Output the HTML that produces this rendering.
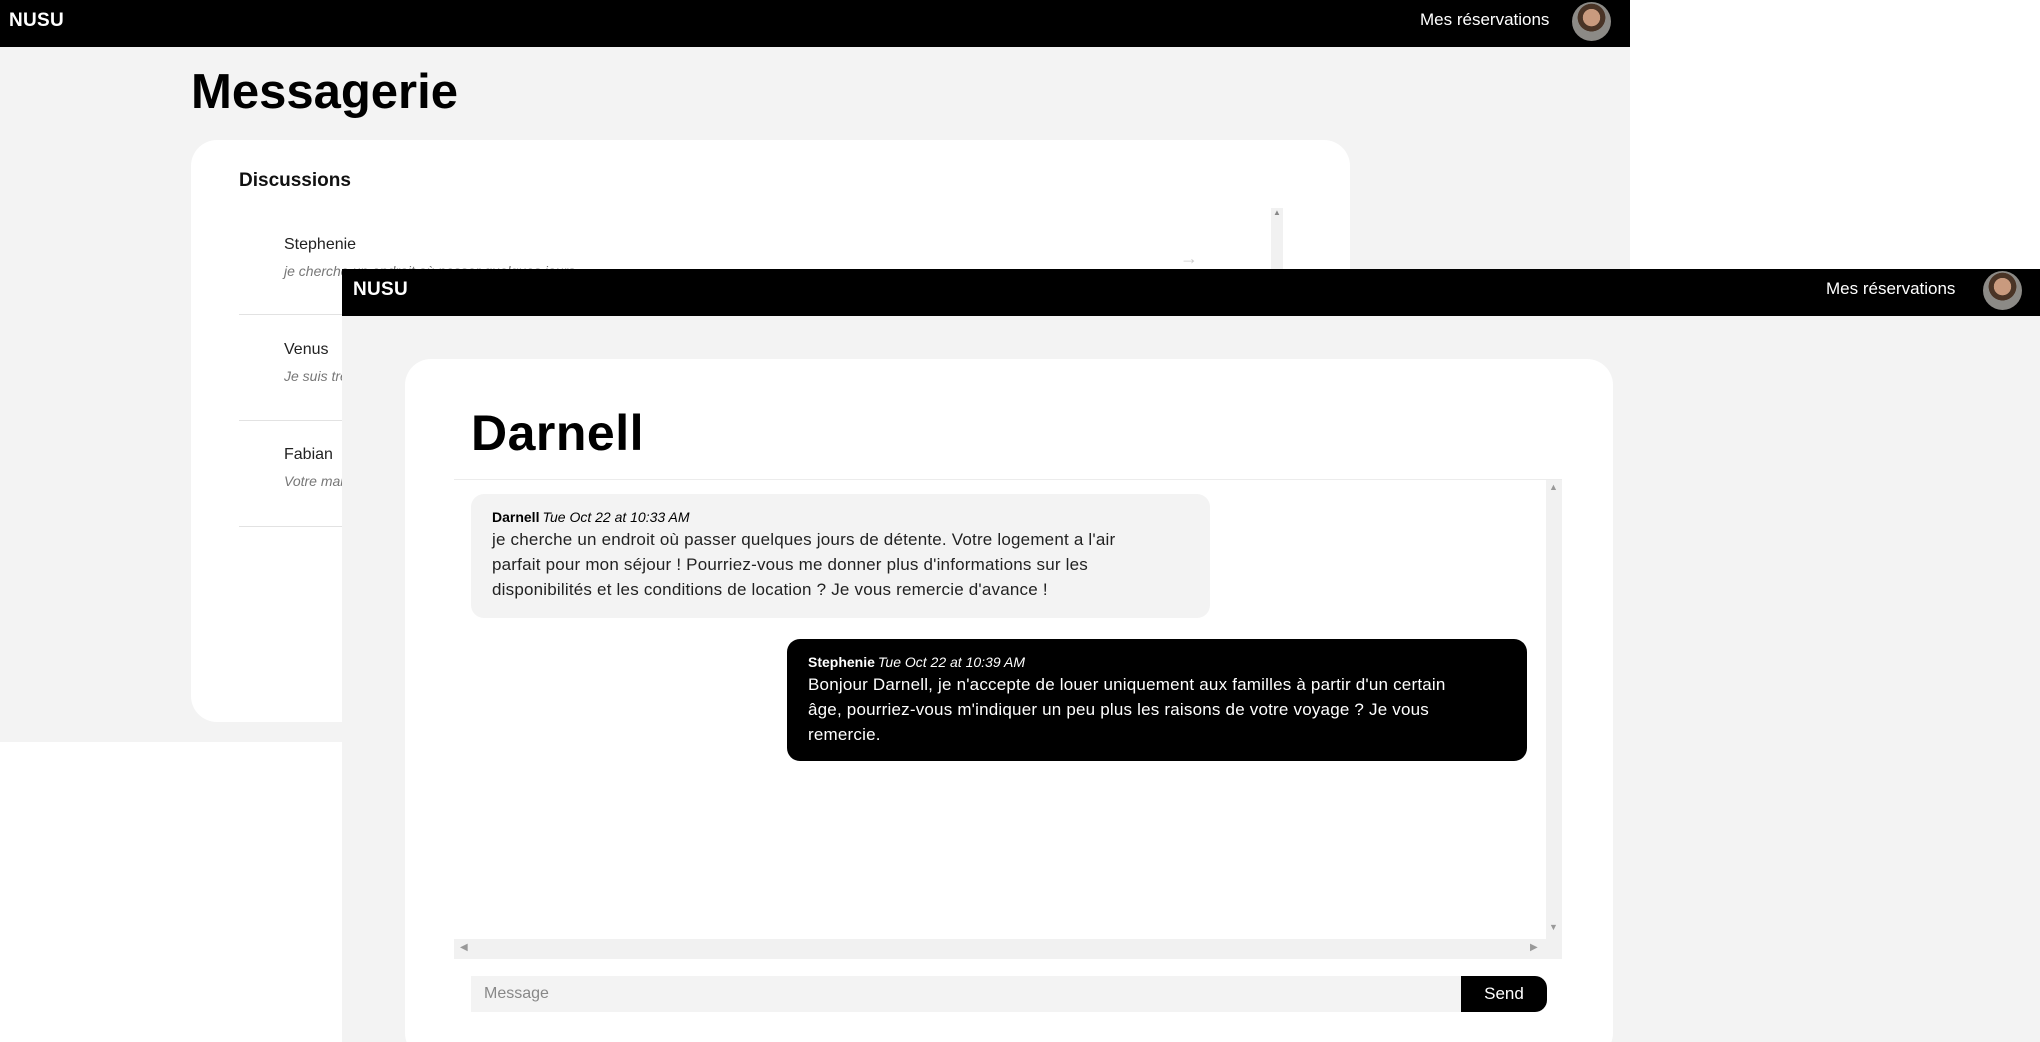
<!DOCTYPE html>
<html><head><meta charset="utf-8">
<style>
*{margin:0;padding:0;box-sizing:border-box}
html,body{width:2040px;height:1042px;overflow:hidden;background:#fff;font-family:"Liberation Sans",sans-serif;position:relative}
.abs{position:absolute}
.nav{background:#000;color:#fff}
.logo{font-weight:bold;font-size:19px;letter-spacing:0.3px}
.av{border-radius:50%;background:radial-gradient(circle at 50% 40%,#c99a7e 0 28%,#4a3426 29% 45%,#8c8a86 46%);}
.sep{height:1px;background:#e2e2e2}
.name{font-size:16px;color:#222}
.prev{font-size:14px;color:#777;font-style:italic}
.msg{font-size:17px;line-height:25px;white-space:nowrap;letter-spacing:0.2px}
.hdr{font-size:14px;line-height:20px}
.hdr b{font-weight:bold}
.hdr i{margin-left:3px}
</style></head><body>
<div class="abs" style="left:0;top:0;width:1630px;height:742px;background:#f3f3f3"></div>
<div class="abs nav" style="left:0;top:0;width:1630px;height:47px"></div>
<div class="abs logo" style="left:9px;top:10px;color:#fff">NUSU</div>
<div class="abs" style="left:1420px;top:10px;color:#fff;font-size:17px">Mes réservations</div>
<div class="abs av" style="left:1572px;top:2px;width:39px;height:39px"></div>
<div class="abs" style="left:191px;top:64px;font-size:49px;font-weight:bold;letter-spacing:0px">Messagerie</div>
<div class="abs" style="left:191px;top:140px;width:1159px;height:582px;background:#fff;border-radius:26px"></div>
<div class="abs" style="left:239px;top:170px;font-size:19px;font-weight:600;color:#111">Discussions</div>
<div class="abs" style="left:1271px;top:208px;width:12px;height:80px;background:#f1f1f1"></div>
<div class="abs" style="left:1273px;top:208px;font-size:8px;color:#888">▲</div>
<div class="abs name" style="left:284px;top:236px">Stephenie</div>
<div class="abs prev" style="left:284px;top:263px">je cherche un endroit où passer quelques jours</div>
<div class="abs" style="left:1180px;top:248px;color:#ccc;font-size:18px">→</div>
<div class="abs sep" style="left:239px;top:314px;width:1030px"></div>
<div class="abs name" style="left:284px;top:341px">Venus</div>
<div class="abs prev" style="left:284px;top:368px">Je suis très</div>
<div class="abs sep" style="left:239px;top:420px;width:1030px"></div>
<div class="abs name" style="left:284px;top:446px">Fabian</div>
<div class="abs prev" style="left:284px;top:473px">Votre maison</div>
<div class="abs sep" style="left:239px;top:526px;width:1030px"></div>

<div class="abs" style="left:342px;top:269px;width:1698px;height:773px;background:#f3f3f3"></div>
<div class="abs nav" style="left:342px;top:269px;width:1698px;height:47px"></div>
<div class="abs logo" style="left:353px;top:279px;color:#fff">NUSU</div>
<div class="abs" style="left:1826px;top:279px;color:#fff;font-size:17px">Mes réservations</div>
<div class="abs av" style="left:1983px;top:271px;width:39px;height:39px"></div>
<div class="abs" style="left:405px;top:359px;width:1208px;height:700px;background:#fff;border-radius:26px"></div>
<div class="abs" style="left:471px;top:404px;font-size:50px;font-weight:bold;letter-spacing:0.5px">Darnell</div>
<div class="abs sep" style="left:454px;top:479px;width:1108px;background:#ececec"></div>
<div class="abs" style="left:1546px;top:480px;width:16px;height:479px;background:#f1f1f1"></div>
<div class="abs" style="left:1549px;top:482px;font-size:9px;color:#999">▲</div>
<div class="abs" style="left:1549px;top:922px;font-size:9px;color:#999">▼</div>
<div class="abs" style="left:454px;top:939px;width:1108px;height:20px;background:#f1f1f1"></div>
<div class="abs" style="left:460px;top:942px;font-size:10px;color:#999">◀</div>
<div class="abs" style="left:1530px;top:942px;font-size:10px;color:#999">▶</div>

<div class="abs" style="left:471px;top:494px;width:739px;height:124px;background:#f3f3f3;border-radius:13px;padding:13px 21px">
<div class="hdr"><b>Darnell</b><i>Tue Oct 22 at 10:33 AM</i></div>
<div class="msg" style="color:#222">je cherche un endroit où passer quelques jours de détente. Votre logement a l'air<br>parfait pour mon séjour ! Pourriez-vous me donner plus d'informations sur les<br>disponibilités et les conditions de location ? Je vous remercie d'avance !</div>
</div>
<div class="abs" style="left:787px;top:639px;width:740px;height:122px;background:#000;color:#fff;border-radius:13px;padding:13px 21px">
<div class="hdr"><b>Stephenie</b><i>Tue Oct 22 at 10:39 AM</i></div>
<div class="msg">Bonjour Darnell, je n'accepte de louer uniquement aux familles à partir d'un certain<br>âge, pourriez-vous m'indiquer un peu plus les raisons de votre voyage ? Je vous<br>remercie.</div>
</div>

<div class="abs" style="left:471px;top:976px;width:990px;height:36px;background:#f3f3f3;padding:9px 13px;font-size:16px;color:#888">Message</div>
<div class="abs" style="left:1461px;top:976px;width:86px;height:36px;background:#000;color:#fff;border-radius:0 12px 12px 0;font-size:17px;text-align:center;line-height:36px">Send</div>
</body></html>
